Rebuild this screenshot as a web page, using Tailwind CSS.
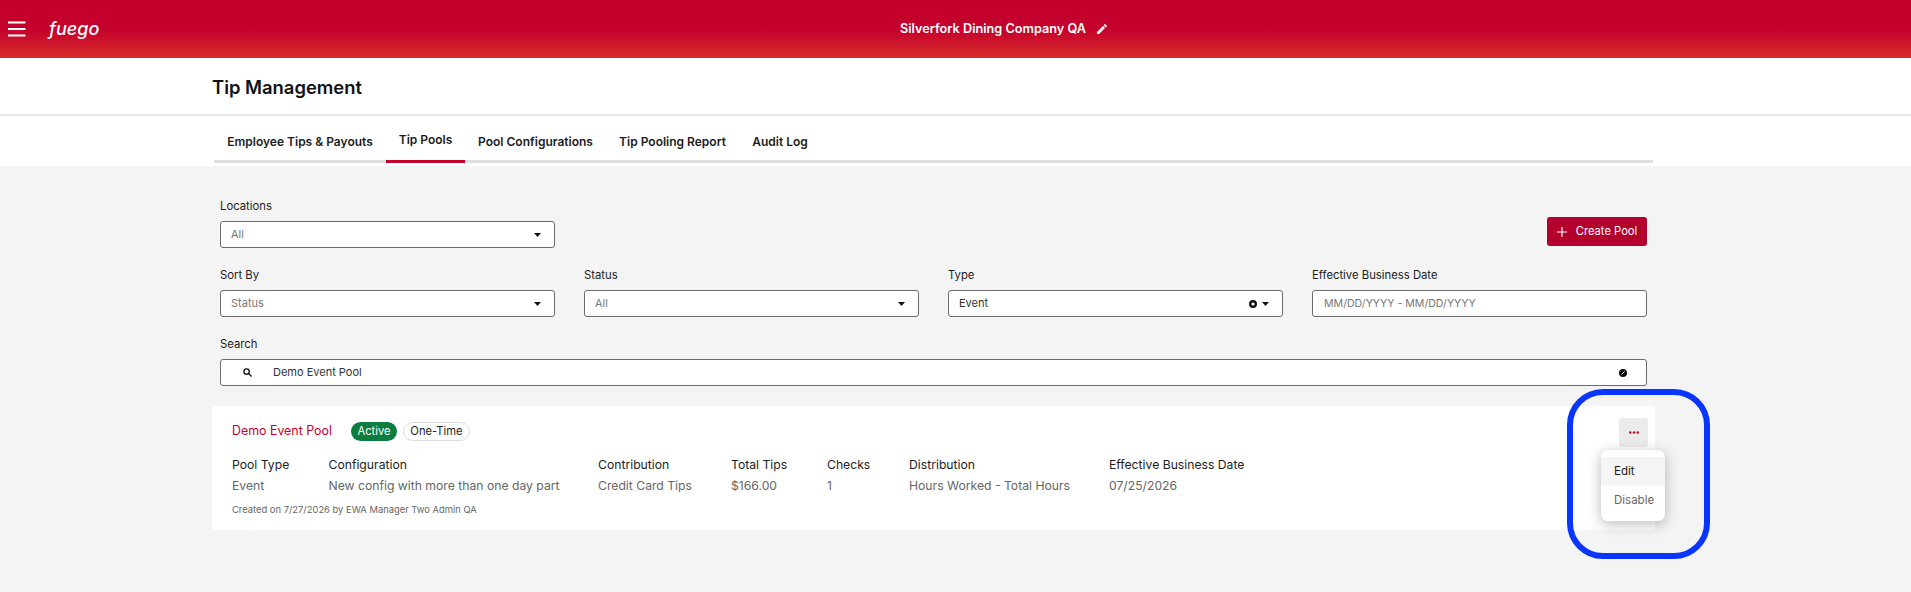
<!DOCTYPE html>
<html><head><meta charset="utf-8"><title>Tip Management</title>
<script src="https://cdn.jsdelivr.net/npm/@tailwindcss/browser@4"></script></head>
<body class="bg-[#f4f4f4] font-['Inter',sans-serif] overflow-hidden">
<div class="relative w-[1911px] h-[592px]">
<header class="relative h-[58px] flex items-center bg-[linear-gradient(180deg,#c4002c_0%,#c4002c_50%,#d72d2b_100%)] text-white">
  <svg class="ml-2 w-[18px] h-[16px]" viewBox="0 0 18 16"><path d="M0 1.5H17.5M0 8H17.5M0 14.5H17.5" stroke="#fff" stroke-width="2"/></svg>
  <span class="ml-[23px] text-[18px] leading-none italic font-medium tracking-[0px] font-['Inter',sans-serif] -mt-[1px]">fuego</span>
  <div class="absolute left-[900px] top-0 h-[58px] flex items-center gap-[10px]">
    <span class="text-[12.700px] font-semibold">Silverfork Dining Company QA</span>
    <svg class="w-[12px] h-[12px]" viewBox="0 0 24 24" fill="#fff"><path d="M2 18V22h4L18 10l-4-4L2 18zM21.700 7a1 1 0 0 0 0-1.400L18.400 2.300a1 1 0 0 0-1.400 0L15 4.300 19.700 9z"/></svg>
  </div>
</header>
<section class="h-[58px] bg-white border-b-2 border-[#e8e8e8] pl-[212px] flex items-center">
  <h1 class="text-[18.400px] font-semibold text-[#111] mt-[3px]">Tip Management</h1>
</section>
<nav class="h-[50px] bg-white pl-[214px]">
  <div class="w-[1439px] h-[47px] border-b-[3px] border-[#dedede] flex text-[12px] font-semibold text-[#1c1c1c]">
    <a class="h-[47px] w-[172px] flex items-center justify-center pt-[4px]">Employee Tips &amp; Payouts</a>
    <a class="h-[47px] w-[79px] flex items-center justify-center pt-[4px] border-b-[3px] border-[#c4002c]">Tip Pools</a>
    <a class="h-[47px] w-[141px] flex items-center justify-center pt-[4px]">Pool Configurations</a>
    <a class="h-[47px] w-[133px] flex items-center justify-center pt-[4px]">Tip Pooling Report</a>
    <a class="h-[47px] w-[82px] flex items-center justify-center pt-[4px]">Audit Log</a>
  </div>
</nav>
<main class="px-[220px] pt-[32px] w-[1867px]">
  <div class="grid grid-cols-[335px_335px_335px_335px] gap-x-[29px] text-[12px]">
    <div class="h-[57px]">
      <label class="block h-[23px] leading-[16px] text-[#1c1c1c] font-normal text-[11.300px]">Locations</label>
      <div class="h-[27px] bg-white border border-[#6b6b6b] rounded-[3px] pl-[10px] pr-[13px] flex items-center justify-between text-[#777] text-[11px]">All<svg class="w-[7px] h-[4px]" viewBox="0 0 7 4"><path d="M0 0H7L3.500 4z" fill="#111"/></svg></div>
    </div>
    <div></div><div></div>
    <div class="flex justify-end items-start pt-[19px]">
      <button class="w-[100px] h-[29px] bg-[#b4002d] rounded-[3px] text-white text-[11.200px] flex items-center justify-center gap-[9px]"><svg class="w-[10px] h-[10px]" viewBox="0 0 10 10"><path d="M5 0V10M0 5H10" stroke="#fff" stroke-width="1.200"/></svg>Create Pool</button>
    </div>
    <div class="mt-[12px]">
      <label class="block h-[23px] leading-[16px] text-[#1c1c1c] font-normal text-[11.300px]">Sort By</label>
      <div class="h-[27px] bg-white border border-[#6b6b6b] rounded-[3px] pl-[10px] pr-[13px] flex items-center justify-between text-[#777] text-[11px]">Status<svg class="w-[7px] h-[4px]" viewBox="0 0 7 4"><path d="M0 0H7L3.500 4z" fill="#111"/></svg></div>
    </div>
    <div class="mt-[12px]">
      <label class="block h-[23px] leading-[16px] text-[#1c1c1c] font-normal text-[11.300px]">Status</label>
      <div class="h-[27px] bg-white border border-[#6b6b6b] rounded-[3px] pl-[10px] pr-[13px] flex items-center justify-between text-[#777] text-[11px]">All<svg class="w-[7px] h-[4px]" viewBox="0 0 7 4"><path d="M0 0H7L3.500 4z" fill="#111"/></svg></div>
    </div>
    <div class="mt-[12px]">
      <label class="block h-[23px] leading-[16px] text-[#1c1c1c] font-normal text-[11.300px]">Type</label>
      <div class="h-[27px] bg-white border border-[#6b6b6b] rounded-[3px] pl-[10px] pr-[13px] flex items-center text-[#333] text-[11px]"><span class="flex-1">Event</span>
        <svg class="w-[8px] h-[8px] mr-[5px]" viewBox="0 0 8 8"><circle cx="4" cy="4" r="2.800" fill="none" stroke="#111" stroke-width="2.400"/></svg>
        <svg class="w-[7px] h-[4px]" viewBox="0 0 7 4"><path d="M0 0H7L3.500 4z" fill="#111"/></svg></div>
    </div>
    <div class="mt-[12px]">
      <label class="block h-[23px] leading-[16px] text-[#1c1c1c] font-normal text-[11.300px]">Effective Business Date</label>
      <div class="h-[27px] bg-white border border-[#6b6b6b] rounded-[3px] pl-[11px] flex items-center text-[#777] text-[10.600px]">MM/DD/YYYY - MM/DD/YYYY</div>
    </div>
    <div class="col-span-4 mt-[19px]">
      <label class="block h-[23px] leading-[16px] text-[#1c1c1c] font-normal text-[11.300px]">Search</label>
      <div class="h-[27px] bg-white border border-[#6b6b6b] rounded-[3px] pl-[22px] pr-[19px] flex items-center text-[#333] text-[11px]">
        <svg class="w-[9px] h-[9px] mr-[21px]" viewBox="0 0 10 10"><circle cx="4" cy="4" r="3" fill="none" stroke="#111" stroke-width="1.500"/><path d="M6.200 6.200L9.500 9.500" stroke="#111" stroke-width="1.500"/></svg>
        <span class="flex-1">Demo Event Pool</span>
        <svg class="w-[8px] h-[8px]" viewBox="0 0 8 8"><circle cx="4" cy="4" r="4" fill="#111"/><path d="M2.500 5.500L5.500 2.500" stroke="#fff" stroke-width="1"/></svg>
      </div>
    </div>
  </div>
</main>
<article class="relative ml-[212px] mt-[20px] w-[1443px] h-[124px] bg-white rounded-[3px] px-[20px] pt-[16px]">
  <div class="flex items-center h-[19px]">
    <h2 class="text-[12.400px] text-[#c4002c] font-normal w-[119px]">Demo Event Pool</h2>
    <span class="h-[19px] w-[46px] rounded-full bg-[#0b7d40] text-white text-[11.200px] flex items-center justify-center">Active</span>
    <span class="ml-[6px] h-[19px] w-[67px] rounded-full bg-white border border-[#dcdcdc] text-[#1c1c1c] text-[11.200px] flex items-center justify-center">One-Time</span>
  </div>
  <dl class="flex mt-[16px] text-[12.200px] leading-[16px]">
    <div class="w-[96.500px]"><dt class="text-[#1c1c1c] mb-[5px]">Pool Type</dt><dd class="text-[#666]">Event</dd></div>
    <div class="w-[269.500px]"><dt class="text-[#1c1c1c] mb-[5px]">Configuration</dt><dd class="text-[#666]">New config with more than one day part</dd></div>
    <div class="w-[133px]"><dt class="text-[#1c1c1c] mb-[5px]">Contribution</dt><dd class="text-[#666]">Credit Card Tips</dd></div>
    <div class="w-[96px]"><dt class="text-[#1c1c1c] mb-[5px]">Total Tips</dt><dd class="text-[#666]">$166.00</dd></div>
    <div class="w-[82px]"><dt class="text-[#1c1c1c] mb-[5px]">Checks</dt><dd class="text-[#666]">1</dd></div>
    <div class="w-[200px]"><dt class="text-[#1c1c1c] mb-[5px]">Distribution</dt><dd class="text-[#666]">Hours Worked - Total Hours</dd></div>
    <div><dt class="text-[#1c1c1c] mb-[5px]">Effective Business Date</dt><dd class="text-[#666]">07/25/2026</dd></div>
  </dl>
  <p class="mt-[9px] text-[9.400px] leading-[14px] text-[#666]">Created on 7/27/2026 by EWA Manager Two Admin QA</p>
  <button class="absolute left-[1407px] top-[12px] w-[29px] h-[29px] rounded-[3px] bg-[#ebebeb] flex items-center justify-center"><svg class="w-[10px] h-[3px]" viewBox="0 0 10 3" fill="#c4002c"><circle cx="1.300" cy="1.500" r="1.200"/><circle cx="5" cy="1.500" r="1.200"/><circle cx="8.700" cy="1.500" r="1.200"/></svg></button>
  <div class="absolute left-[1389px] top-[44px] w-[64px] h-[71px] bg-white rounded-[7px] shadow-[0_3px_14px_rgba(0,0,0,0.28)] pt-[7px] text-[11.500px]">
    <div class="h-[29px] bg-[#f5f5f5] pl-[13px] flex items-center text-[#1c1c1c]">Edit</div>
    <div class="h-[29px] pl-[13px] flex items-center text-[#666]">Disable</div>
  </div>
</article>
<div class="absolute left-[1567px] top-[389px] w-[143px] h-[170px] rounded-[36px] border-[6px] border-[#0a35ff] pointer-events-none"></div>
</div>
</body></html>
